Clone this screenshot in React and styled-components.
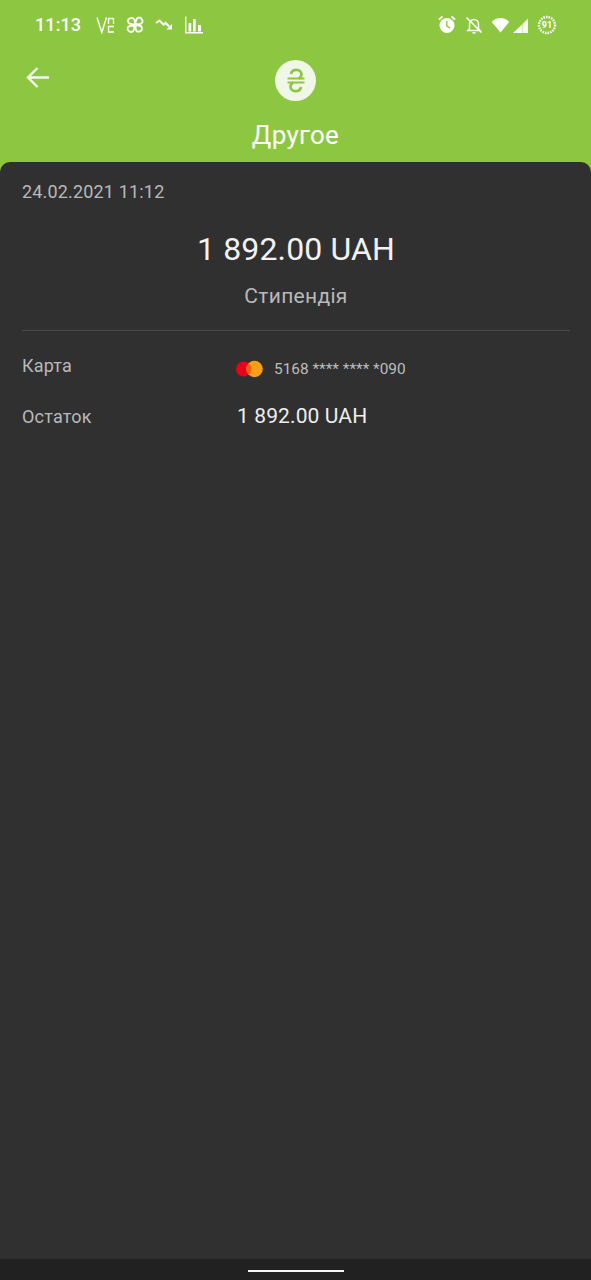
import React from "react";
import styled, { createGlobalStyle } from "styled-components";

const Global = createGlobalStyle`
  html, body { margin: 0; padding: 0; background: #8dc741; }
  * { box-sizing: border-box; }
`;
const Screen = styled.div`
  width: 591px; height: 1280px; display: flex; flex-direction: column;
  background: #8dc741; font-family: Roboto, sans-serif; overflow: hidden;
`;
const StatusBar = styled.div`
  height: 50px; flex: none; display: flex; align-items: center; justify-content: space-between;
  padding: 0 34px 1px 35px; color: #fff;
`;
const StatusGroup = styled.div`
  display: flex; align-items: center; gap: ${p => p.$gap}px;
`;
const Clock = styled.span`
  font-size: 18px; font-weight: 500; letter-spacing: 0.1px; margin-right: 4px; line-height: 20px;
`;
const Header = styled.div`
  height: 112px; flex: none; display: flex; flex-direction: column; align-items: center; position: relative;
  padding-top: 10px;
`;
const BackButton = styled.div`
  position: absolute; left: 25px; top: 15px; width: 25px; height: 25px; display: flex;
`;
const Badge = styled.div`
  width: 41px; height: 41px; border-radius: 50%; background: #f1f7e7; display: flex;
  align-items: center; justify-content: center;
`;
const Title = styled.div`
  margin-top: 18px; font-size: 26px; line-height: 32px; color: #fff; letter-spacing: 0.3px;
`;
const Sheet = styled.div`
  flex: 1; background: #303030; border-radius: 10px 10px 0 0; padding: 19px 21px 0 22px;
  display: flex; flex-direction: column;
`;
const DateLine = styled.div`
  font-size: 18px; line-height: 22px; color: #b9b9b9; letter-spacing: 0.17px;
`;
const Amount = styled.div`
  margin-top: 26px; text-align: center; font-size: 32px; line-height: 40px; color: #f2f2f2; letter-spacing: 0.13px;
`;
const Note = styled.div`
  margin-top: 14px; text-align: center; font-size: 21px; line-height: 26px; color: #b9b9b9; letter-spacing: 0.3px;
`;
const Divider = styled.div`
  margin-top: 21px; height: 1px; background: #4a4a4a;
`;
const Row = styled.div`
  display: grid; grid-template-columns: 214px 1fr; align-items: start; margin-top: ${p => p.$top}px;
`;
const Label = styled.div`
  font-size: 18px; line-height: 22px; color: #b9b9b9; letter-spacing: 0.2px;
`;
const CardValue = styled.div`
  display: flex; align-items: center; gap: 11px; font-size: 15.4px; line-height: 22px; color: #bdbdbd; padding-top: 3px;
`;
const Value = styled.div`
  padding-left: 1px; font-size: 21px; line-height: 20px; color: #eeeeee; letter-spacing: 0.12px;
`;
const NavBar = styled.div`
  height: 21px; flex: none; background: #212121; display: flex; justify-content: center; padding-top: 11px;
`;
const Handle = styled.div`
  width: 96px; height: 2px; background: #f5f5f5;
`;
const Ico = styled.svg`
  display: block; flex: none;
`;

const I = ({ w, h = 20, children }) => (
  <Ico width={w} height={h} viewBox={`0 0 ${w} ${h}`} fill="none">{children}</Ico>
);

export default function App() {
  return (
    <Screen>
      <Global />
      <StatusBar>
        <StatusGroup $gap={11}>
          <Clock>11:13</Clock>
          <I w={19} h={18}>
            <path d="M1 1.500l4.800 15 4.700-15" stroke="#fff" strokeWidth="1.400" />
            <path d="M12.500 8V2.500h5V8" stroke="#fff" strokeWidth="1.300" />
            <path d="M18 10.500h-5.500v5.500H18" stroke="#fff" strokeWidth="1.300" />
          </I>
          <I w={18} h={18}>
            <g stroke="#fff" strokeWidth="1.800">
              <path d="M9 8.500C6 8.500 2 8 2 5s4-3.500 5.500-2.500C9 3.500 9 6 9 8.500z" />
              <path d="M9.500 8C9.500 5 10.500 1.500 13 1.500s4 3 3.300 5C15.500 8 12 8.500 9.500 8z" />
              <path d="M9.500 9c3 0 6.500.5 6.500 3.500S12.500 16 11 15.500C9.500 14.500 9.500 12 9.500 9z" />
              <path d="M8.500 9.500c0 3-1 6.500-3.500 6.500S1 13 1.700 11.500C2.500 10 6 9.500 8.500 9.500z" />
            </g>
          </I>
          <I w={19} h={18}>
            <path d="M1 7l3.500-2.500 4 4 2-1.500 3.500 3.500" stroke="#fff" strokeWidth="2.100" strokeLinejoin="miter" />
            <path d="M11.500 13.500H17V8z" fill="#fff" />
          </I>
          <I w={18} h={18}>
            <path d="M0.700 0.500v16.300H18" stroke="#fff" strokeWidth="1.400" />
            <path d="M3.500 7h2.700v8.500H3.500zM8 3h2.700v12.500H8zM13 9h3v6.500h-3z" fill="#fff" />
          </I>
        </StatusGroup>
        <StatusGroup $gap={8}>
          <I w={20} h={20}>
            <circle cx="10" cy="10.500" r="7.500" fill="#fff" />
            <path d="M9.800 6v5l3.200 2" stroke="#8dc741" strokeWidth="1.400" />
            <path d="M2 4.500l3.500-3M18 4.500l-3.500-3" stroke="#fff" strokeWidth="1.800" />
          </I>
          <I w={18} h={18}>
            <path d="M4.500 13V8a4.500 4.500 0 0 1 9 0v5l1.500 1.500H3z" stroke="#fff" strokeWidth="1.500" />
            <path d="M7.500 16.800h3" stroke="#fff" strokeWidth="1.600" />
            <path d="M1.500 1.500l15 15" stroke="#fff" strokeWidth="1.700" />
          </I>
          <StatusGroup $gap={2}>
            <I w={19} h={16}>
              <path d="M9.500 15.500L0.800 5C3 2.500 6 1 9.500 1s6.500 1.500 8.700 4z" fill="#fff" />
            </I>
            <I w={17} h={18}>
              <path d="M9 9.500L1 17h8z" fill="#fff" />
              <path d="M9 9.500L16 2.500V17H9z" fill="#fff" opacity="0.9" />
              <path d="M10.500 8v9" stroke="#8dc741" strokeWidth="0.6" opacity="0.5" />
            </I>
          </StatusGroup>
          <I w={20} h={20}>
            <circle cx="10" cy="10" r="8" stroke="#fff" strokeWidth="2.400" strokeDasharray="1.600 1" />
            <text x="10" y="13.200" textAnchor="middle" fontSize="9" fontWeight="700" fontFamily="Roboto" fill="#fff">91</text>
          </I>
        </StatusGroup>
      </StatusBar>
      <Header>
        <BackButton>
          <I w={25} h={25}>
            <path d="M24 12.500H3M12.500 3L3 12.500 12.500 22" stroke="#f4f9ec" strokeWidth="2.400" />
          </I>
        </BackButton>
        <Badge>
          <I w={24} h={28}>
            <path d="M7 7C7.500 4 10 2.800 12.500 2.800c3 0 5 2 5 4.700 0 2-1.200 3.200-2.800 4" stroke="#8dc741" strokeWidth="2.700" />
            <path d="M17 20C16.500 23 14 24.200 11.500 24.200c-3 0-5-2-5-4.700 0-2 1.200-3.200 2.800-4" stroke="#8dc741" strokeWidth="2.700" />
            <path d="M3.500 11.500h17M3.500 15.500h17" stroke="#8dc741" strokeWidth="2.200" />
          </I>
        </Badge>
        <Title>Другое</Title>
      </Header>
      <Sheet>
        <DateLine>24.02.2021 11:12</DateLine>
        <Amount>1 892.00 UAH</Amount>
        <Note>Стипендія</Note>
        <Divider />
        <Row $top={24}>
          <Label>Карта</Label>
          <CardValue>
            <I w={27} h={18}>
              <circle cx="7.500" cy="9" r="7.500" fill="#eb001b" />
              <circle cx="18.500" cy="9" r="8.300" fill="#f79e1b" />
              <path d="M12.800 3.200a8.300 8.300 0 0 0 0 11.600a7.500 7.500 0 0 0 0-11.600z" fill="#ff5f00" />
            </I>
            <span>5168 **** **** *090</span>
          </CardValue>
        </Row>
        <Row $top={26}>
          <Label>Остаток</Label>
          <Value>1 892.00 UAH</Value>
        </Row>
      </Sheet>
      <NavBar><Handle /></NavBar>
    </Screen>
  );
}
